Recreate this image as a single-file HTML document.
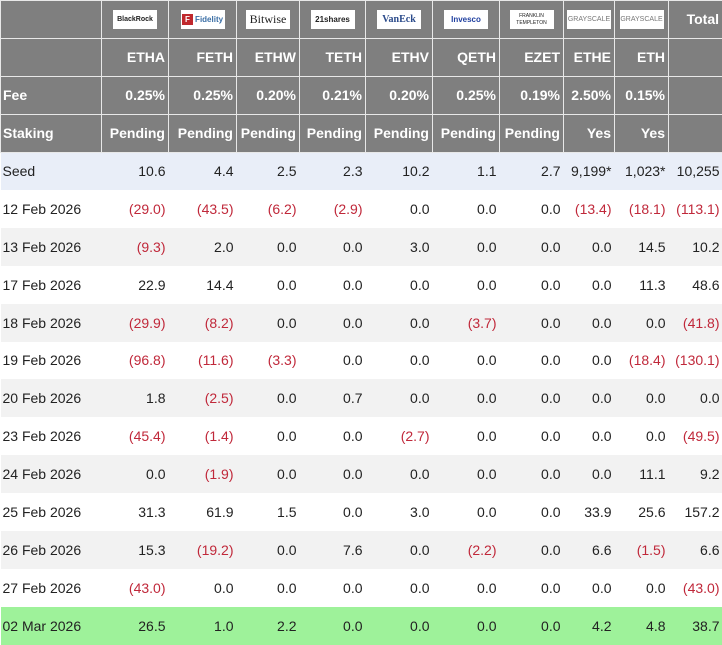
<!DOCTYPE html><html><head><style>
body{margin:0;width:722px;height:642px;overflow:hidden;background:#fff;font-family:"Liberation Sans",Arial,sans-serif;font-size:14px;color:#222}
table{border-collapse:collapse;table-layout:fixed;width:722px}
td{height:37.9px;padding:0 3px 0 0;text-align:right;white-space:nowrap;box-sizing:border-box}
tr.h td{background:#7f7f7f;color:#fff;font-weight:bold;border:1px solid #e8e8e8}
tr.h td:first-child{text-align:left;padding-left:2px}
td.l{text-align:left;padding-left:2px}
.r{color:#c0283a}
tr.s td{background:#e9eef8}
tr.g td{background:#f2f2f2}
tr.w td{background:#fff}
tr.gr td{background:#9ef29a}
.lg{display:inline-block;background:#fff;height:19px;width:44px;vertical-align:middle;font-size:8px;line-height:19px;text-align:center;color:#222;font-weight:bold}
tr.h td.c{text-align:center;padding:0}
</style></head><body>
<table>
<colgroup><col style="width:101px"><col style="width:67px"><col style="width:68px"><col style="width:63px"><col style="width:66px"><col style="width:67px"><col style="width:67px"><col style="width:64px"><col style="width:51px"><col style="width:54px"><col style="width:54px"></colgroup>
<tr class="h"><td></td>
<td class="c"><span class="lg" style="font-size:7px">BlackRock</span></td>
<td class="c"><span class="lg" style="color:#3a6ea5"><span style="background:#c0282d;color:#fff;padding:1px 3px">F</span> Fidelity</span></td>
<td class="c"><span class="lg" style="font-family:'Liberation Serif',serif;font-size:12px;font-weight:normal">Bitwise</span></td>
<td class="c"><span class="lg">21shares</span></td>
<td class="c"><span class="lg" style="font-family:'Liberation Serif',serif;font-size:10px;color:#2a4a8a">VanEck</span></td>
<td class="c"><span class="lg" style="color:#2040a0">Invesco</span></td>
<td class="c"><span class="lg" style="font-size:5px;line-height:7px;padding-top:3px;height:16px;font-weight:normal">FRANKLIN<br>TEMPLETON</span></td>
<td class="c"><span class="lg" style="font-size:7px;font-weight:normal;color:#777">GRAYSCALE</span></td>
<td class="c"><span class="lg" style="font-size:7px;font-weight:normal;color:#777">GRAYSCALE</span></td>
<td>Total</td></tr>
<tr class="h"><td></td><td>ETHA</td><td>FETH</td><td>ETHW</td><td>TETH</td><td>ETHV</td><td>QETH</td><td>EZET</td><td>ETHE</td><td>ETH</td><td></td></tr>
<tr class="h"><td>Fee</td><td>0.25%</td><td>0.25%</td><td>0.20%</td><td>0.21%</td><td>0.20%</td><td>0.25%</td><td>0.19%</td><td>2.50%</td><td>0.15%</td><td></td></tr>
<tr class="h"><td>Staking</td><td>Pending</td><td>Pending</td><td>Pending</td><td>Pending</td><td>Pending</td><td>Pending</td><td>Pending</td><td>Yes</td><td>Yes</td><td></td></tr>
<tr class="s"><td class="l">Seed</td><td>10.6</td><td>4.4</td><td>2.5</td><td>2.3</td><td>10.2</td><td>1.1</td><td>2.7</td><td>9,199*</td><td>1,023*</td><td>10,255</td></tr>
<tr class="w"><td class="l">12 Feb 2026</td><td class="r">(29.0)</td><td class="r">(43.5)</td><td class="r">(6.2)</td><td class="r">(2.9)</td><td>0.0</td><td>0.0</td><td>0.0</td><td class="r">(13.4)</td><td class="r">(18.1)</td><td class="r">(113.1)</td></tr>
<tr class="g"><td class="l">13 Feb 2026</td><td class="r">(9.3)</td><td>2.0</td><td>0.0</td><td>0.0</td><td>3.0</td><td>0.0</td><td>0.0</td><td>0.0</td><td>14.5</td><td>10.2</td></tr>
<tr class="w"><td class="l">17 Feb 2026</td><td>22.9</td><td>14.4</td><td>0.0</td><td>0.0</td><td>0.0</td><td>0.0</td><td>0.0</td><td>0.0</td><td>11.3</td><td>48.6</td></tr>
<tr class="g"><td class="l">18 Feb 2026</td><td class="r">(29.9)</td><td class="r">(8.2)</td><td>0.0</td><td>0.0</td><td>0.0</td><td class="r">(3.7)</td><td>0.0</td><td>0.0</td><td>0.0</td><td class="r">(41.8)</td></tr>
<tr class="w"><td class="l">19 Feb 2026</td><td class="r">(96.8)</td><td class="r">(11.6)</td><td class="r">(3.3)</td><td>0.0</td><td>0.0</td><td>0.0</td><td>0.0</td><td>0.0</td><td class="r">(18.4)</td><td class="r">(130.1)</td></tr>
<tr class="g"><td class="l">20 Feb 2026</td><td>1.8</td><td class="r">(2.5)</td><td>0.0</td><td>0.7</td><td>0.0</td><td>0.0</td><td>0.0</td><td>0.0</td><td>0.0</td><td>0.0</td></tr>
<tr class="w"><td class="l">23 Feb 2026</td><td class="r">(45.4)</td><td class="r">(1.4)</td><td>0.0</td><td>0.0</td><td class="r">(2.7)</td><td>0.0</td><td>0.0</td><td>0.0</td><td>0.0</td><td class="r">(49.5)</td></tr>
<tr class="g"><td class="l">24 Feb 2026</td><td>0.0</td><td class="r">(1.9)</td><td>0.0</td><td>0.0</td><td>0.0</td><td>0.0</td><td>0.0</td><td>0.0</td><td>11.1</td><td>9.2</td></tr>
<tr class="w"><td class="l">25 Feb 2026</td><td>31.3</td><td>61.9</td><td>1.5</td><td>0.0</td><td>3.0</td><td>0.0</td><td>0.0</td><td>33.9</td><td>25.6</td><td>157.2</td></tr>
<tr class="g"><td class="l">26 Feb 2026</td><td>15.3</td><td class="r">(19.2)</td><td>0.0</td><td>7.6</td><td>0.0</td><td class="r">(2.2)</td><td>0.0</td><td>6.6</td><td class="r">(1.5)</td><td>6.6</td></tr>
<tr class="w"><td class="l">27 Feb 2026</td><td class="r">(43.0)</td><td>0.0</td><td>0.0</td><td>0.0</td><td>0.0</td><td>0.0</td><td>0.0</td><td>0.0</td><td>0.0</td><td class="r">(43.0)</td></tr>
<tr class="gr"><td class="l">02 Mar 2026</td><td>26.5</td><td>1.0</td><td>2.2</td><td>0.0</td><td>0.0</td><td>0.0</td><td>0.0</td><td>4.2</td><td>4.8</td><td>38.7</td></tr>
</table>
</body></html>
